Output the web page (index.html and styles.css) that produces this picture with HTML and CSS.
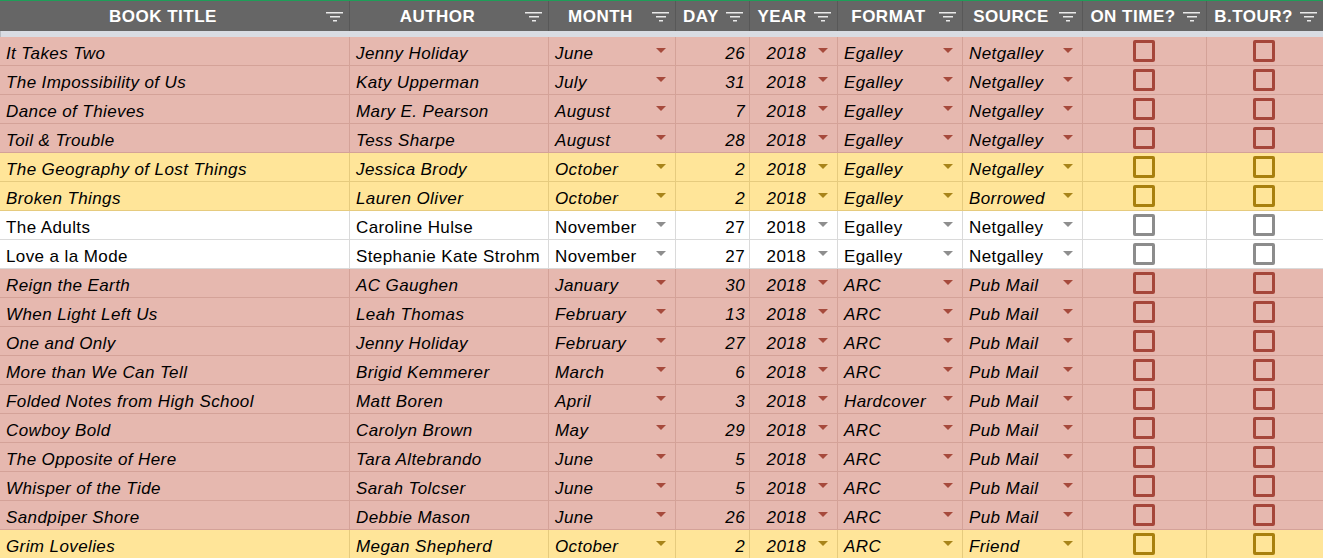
FILE: index.html
```html
<!DOCTYPE html>
<html>
<head>
<meta charset="utf-8">
<link rel="stylesheet" href="styles.css">
</head>
<body>
<div class="sheet">
  <div class="topline"></div>
  <div class="row head">
    <div class="h"><span class="ht">BOOK TITLE</span><svg class="fi" viewBox="0 0 17 10"><path d="M0 0.75H17M4 4.75H14M7 8.75H11"/></svg></div>
    <div class="h"><span class="ht">AUTHOR</span><svg class="fi" viewBox="0 0 17 10"><path d="M0 0.75H17M4 4.75H14M7 8.75H11"/></svg></div>
    <div class="h"><span class="ht">MONTH</span><svg class="fi" viewBox="0 0 17 10"><path d="M0 0.75H17M4 4.75H14M7 8.75H11"/></svg></div>
    <div class="h"><span class="ht">DAY</span><svg class="fi" viewBox="0 0 17 10"><path d="M0 0.75H17M4 4.75H14M7 8.75H11"/></svg></div>
    <div class="h"><span class="ht">YEAR</span><svg class="fi" viewBox="0 0 17 10"><path d="M0 0.75H17M4 4.75H14M7 8.75H11"/></svg></div>
    <div class="h"><span class="ht">FORMAT</span><svg class="fi" viewBox="0 0 17 10"><path d="M0 0.75H17M4 4.75H14M7 8.75H11"/></svg></div>
    <div class="h"><span class="ht">SOURCE</span><svg class="fi" viewBox="0 0 17 10"><path d="M0 0.75H17M4 4.75H14M7 8.75H11"/></svg></div>
    <div class="h"><span class="ht">ON TIME?</span><svg class="fi" viewBox="0 0 17 10"><path d="M0 0.75H17M4 4.75H14M7 8.75H11"/></svg></div>
    <div class="h"><span class="ht">B.TOUR?</span><svg class="fi" viewBox="0 0 17 10"><path d="M0 0.75H17M4 4.75H14M7 8.75H11"/></svg></div>
  </div>
  <div class="frozen"></div>

  <div class="row pink"><div class="c">It Takes Two</div><div class="c">Jenny Holiday</div><div class="c dd"><span>June</span><i></i></div><div class="c num">26</div><div class="c dd yr"><span>2018</span><i></i></div><div class="c dd"><span>Egalley</span><i></i></div><div class="c dd"><span>Netgalley</span><i></i></div><div class="c ck"><b></b></div><div class="c ck"><b></b></div></div>
  <div class="row pink"><div class="c">The Impossibility of Us</div><div class="c">Katy Upperman</div><div class="c dd"><span>July</span><i></i></div><div class="c num">31</div><div class="c dd yr"><span>2018</span><i></i></div><div class="c dd"><span>Egalley</span><i></i></div><div class="c dd"><span>Netgalley</span><i></i></div><div class="c ck"><b></b></div><div class="c ck"><b></b></div></div>
  <div class="row pink"><div class="c">Dance of Thieves</div><div class="c">Mary E. Pearson</div><div class="c dd"><span>August</span><i></i></div><div class="c num">7</div><div class="c dd yr"><span>2018</span><i></i></div><div class="c dd"><span>Egalley</span><i></i></div><div class="c dd"><span>Netgalley</span><i></i></div><div class="c ck"><b></b></div><div class="c ck"><b></b></div></div>
  <div class="row pink"><div class="c">Toil &amp; Trouble</div><div class="c">Tess Sharpe</div><div class="c dd"><span>August</span><i></i></div><div class="c num">28</div><div class="c dd yr"><span>2018</span><i></i></div><div class="c dd"><span>Egalley</span><i></i></div><div class="c dd"><span>Netgalley</span><i></i></div><div class="c ck"><b></b></div><div class="c ck"><b></b></div></div>
  <div class="row yellow"><div class="c">The Geography of Lost Things</div><div class="c">Jessica Brody</div><div class="c dd"><span>October</span><i></i></div><div class="c num">2</div><div class="c dd yr"><span>2018</span><i></i></div><div class="c dd"><span>Egalley</span><i></i></div><div class="c dd"><span>Netgalley</span><i></i></div><div class="c ck"><b></b></div><div class="c ck"><b></b></div></div>
  <div class="row yellow"><div class="c">Broken Things</div><div class="c">Lauren Oliver</div><div class="c dd"><span>October</span><i></i></div><div class="c num">2</div><div class="c dd yr"><span>2018</span><i></i></div><div class="c dd"><span>Egalley</span><i></i></div><div class="c dd"><span>Borrowed</span><i></i></div><div class="c ck"><b></b></div><div class="c ck"><b></b></div></div>
  <div class="row white"><div class="c">The Adults</div><div class="c">Caroline Hulse</div><div class="c dd"><span>November</span><i></i></div><div class="c num">27</div><div class="c dd yr"><span>2018</span><i></i></div><div class="c dd"><span>Egalley</span><i></i></div><div class="c dd"><span>Netgalley</span><i></i></div><div class="c ck"><b></b></div><div class="c ck"><b></b></div></div>
  <div class="row white"><div class="c">Love a la Mode</div><div class="c">Stephanie Kate Strohm</div><div class="c dd"><span>November</span><i></i></div><div class="c num">27</div><div class="c dd yr"><span>2018</span><i></i></div><div class="c dd"><span>Egalley</span><i></i></div><div class="c dd"><span>Netgalley</span><i></i></div><div class="c ck"><b></b></div><div class="c ck"><b></b></div></div>
  <div class="row pink"><div class="c">Reign the Earth</div><div class="c">AC Gaughen</div><div class="c dd"><span>January</span><i></i></div><div class="c num">30</div><div class="c dd yr"><span>2018</span><i></i></div><div class="c dd"><span>ARC</span><i></i></div><div class="c dd"><span>Pub Mail</span><i></i></div><div class="c ck"><b></b></div><div class="c ck"><b></b></div></div>
  <div class="row pink"><div class="c">When Light Left Us</div><div class="c">Leah Thomas</div><div class="c dd"><span>February</span><i></i></div><div class="c num">13</div><div class="c dd yr"><span>2018</span><i></i></div><div class="c dd"><span>ARC</span><i></i></div><div class="c dd"><span>Pub Mail</span><i></i></div><div class="c ck"><b></b></div><div class="c ck"><b></b></div></div>
  <div class="row pink"><div class="c">One and Only</div><div class="c">Jenny Holiday</div><div class="c dd"><span>February</span><i></i></div><div class="c num">27</div><div class="c dd yr"><span>2018</span><i></i></div><div class="c dd"><span>ARC</span><i></i></div><div class="c dd"><span>Pub Mail</span><i></i></div><div class="c ck"><b></b></div><div class="c ck"><b></b></div></div>
  <div class="row pink"><div class="c">More than We Can Tell</div><div class="c">Brigid Kemmerer</div><div class="c dd"><span>March</span><i></i></div><div class="c num">6</div><div class="c dd yr"><span>2018</span><i></i></div><div class="c dd"><span>ARC</span><i></i></div><div class="c dd"><span>Pub Mail</span><i></i></div><div class="c ck"><b></b></div><div class="c ck"><b></b></div></div>
  <div class="row pink"><div class="c">Folded Notes from High School</div><div class="c">Matt Boren</div><div class="c dd"><span>April</span><i></i></div><div class="c num">3</div><div class="c dd yr"><span>2018</span><i></i></div><div class="c dd"><span>Hardcover</span><i></i></div><div class="c dd"><span>Pub Mail</span><i></i></div><div class="c ck"><b></b></div><div class="c ck"><b></b></div></div>
  <div class="row pink"><div class="c">Cowboy Bold</div><div class="c">Carolyn Brown</div><div class="c dd"><span>May</span><i></i></div><div class="c num">29</div><div class="c dd yr"><span>2018</span><i></i></div><div class="c dd"><span>ARC</span><i></i></div><div class="c dd"><span>Pub Mail</span><i></i></div><div class="c ck"><b></b></div><div class="c ck"><b></b></div></div>
  <div class="row pink"><div class="c">The Opposite of Here</div><div class="c">Tara Altebrando</div><div class="c dd"><span>June</span><i></i></div><div class="c num">5</div><div class="c dd yr"><span>2018</span><i></i></div><div class="c dd"><span>ARC</span><i></i></div><div class="c dd"><span>Pub Mail</span><i></i></div><div class="c ck"><b></b></div><div class="c ck"><b></b></div></div>
  <div class="row pink"><div class="c">Whisper of the Tide</div><div class="c">Sarah Tolcser</div><div class="c dd"><span>June</span><i></i></div><div class="c num">5</div><div class="c dd yr"><span>2018</span><i></i></div><div class="c dd"><span>ARC</span><i></i></div><div class="c dd"><span>Pub Mail</span><i></i></div><div class="c ck"><b></b></div><div class="c ck"><b></b></div></div>
  <div class="row pink"><div class="c">Sandpiper Shore</div><div class="c">Debbie Mason</div><div class="c dd"><span>June</span><i></i></div><div class="c num">26</div><div class="c dd yr"><span>2018</span><i></i></div><div class="c dd"><span>ARC</span><i></i></div><div class="c dd"><span>Pub Mail</span><i></i></div><div class="c ck"><b></b></div><div class="c ck"><b></b></div></div>
  <div class="row yellow"><div class="c">Grim Lovelies</div><div class="c">Megan Shepherd</div><div class="c dd"><span>October</span><i></i></div><div class="c num">2</div><div class="c dd yr"><span>2018</span><i></i></div><div class="c dd"><span>ARC</span><i></i></div><div class="c dd"><span>Friend</span><i></i></div><div class="c ck"><b></b></div><div class="c ck"><b></b></div></div>
</div>
</body>
</html>
```

FILE: styles.css
```css
html, body {
  margin: 0;
  padding: 0;
  background: #ffffff;
  overflow: hidden;
}
.sheet {
  width: 1323px;
  overflow: hidden;
  font-family: "Liberation Sans", Arial, sans-serif;
  font-size: 17px;
  color: #000;
}
.topline {
  height: 1px;
  background: #1e9e58;
}
.row {
  display: grid;
  grid-template-columns: 350px 199px 127px 74px 88px 125px 120px 124px 117px;
  height: 29px;
}
.head {
  height: 30px;
  background: #666666;
}
.frozen {
  height: 6px;
  background: #d9dce3;
  border-left: 1px solid #b9bcc2;
}
.h {
  display: flex;
  align-items: center;
  border-right: 1px solid #585858;
  color: #ffffff;
  font-weight: bold;
  letter-spacing: 0.5px;
  min-width: 0;
}
.ht {
  flex: 1;
  text-align: center;
  white-space: nowrap;
  padding-top: 2px;
}
.fi {
  width: 17px;
  height: 10px;
  margin: 1px 6px 0 0;
  flex: none;
}
.fi path {
  stroke: #e9e9e9;
  stroke-width: 1.5;
  fill: none;
}

.c {
  display: flex;
  align-items: flex-end;
  padding: 0 0 2px 6px;
  line-height: 19px;
  letter-spacing: 0.4px;
  white-space: nowrap;
  overflow: hidden;
  border-right: 1px solid;
  border-bottom: 1px solid;
  min-width: 0;
}
.num {
  justify-content: flex-end;
  padding-right: 4px;
}
.dd span {
  flex: 1;
}
.yr span {
  text-align: right;
  padding-right: 12px;
}
.dd i {
  flex: none;
  align-self: center;
  width: 0;
  height: 0;
  border-left: 5px solid transparent;
  border-right: 5px solid transparent;
  border-top: 5px solid;
  margin: 0 9px 0 0;
}
.ck {
  justify-content: center;
  align-items: center;
  padding: 0 2px 0 0;
}
.ck b {
  display: block;
  width: 16px;
  height: 16px;
  border: 3px solid;
  border-radius: 2px;
  margin-bottom: 1px;
}

.pink {
  background: #e6b8af;
  font-style: italic;
}
.pink .c { border-color: #d4a298; }
.pink .dd i { border-top-color: #a64a3c; }
.pink .ck b { border-color: #a5463a; }

.yellow {
  background: #ffe599;
  font-style: italic;
}
.yellow .c { border-color: #e6cb7e; }
.yellow .dd i { border-top-color: #a8841a; }
.yellow .ck b { border-color: #a8800e; }

.white {
  background: #ffffff;
}
.white .c { border-color: #dadada; }
.white .dd i { border-top-color: #8e8e8e; }
.white .ck b { border-color: #8c8c8c; }
```
